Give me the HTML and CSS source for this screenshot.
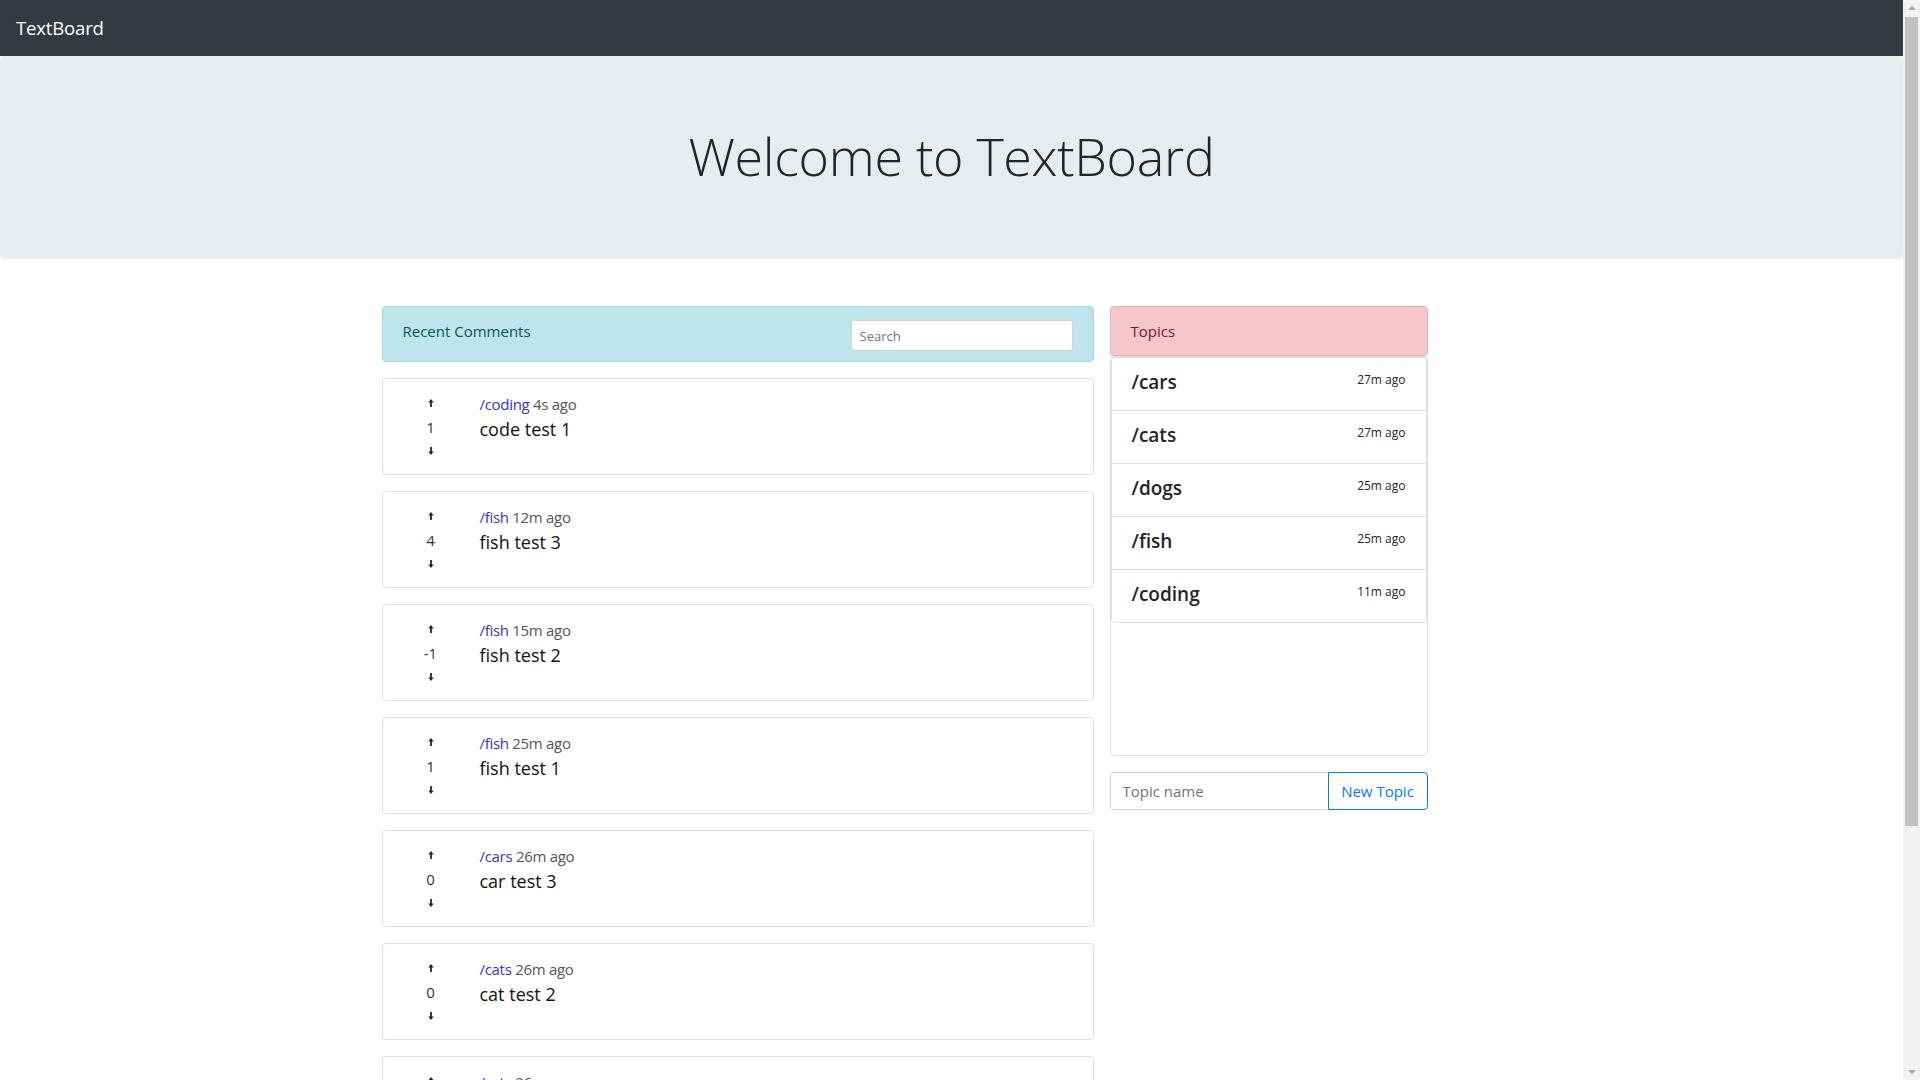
FILE: index.html
```html
<!DOCTYPE html>
<html lang="en">
<head>
<meta charset="utf-8">
<title>TextBoard</title>
<link rel="stylesheet" href="styles.css">
</head>
<body>
<nav class="navbar"><a class="brand" href="#">TextBoard</a></nav>
<header class="jumbotron"><h1 class="display">Welcome to TextBoard</h1></header>
<main class="container">
  <section class="col-comments">
    <div class="comments-header">
      <span class="header-title">Recent Comments</span>
      <input class="search" type="text" placeholder="Search">
    </div>

    <div class="comment">
      <div class="vote">
        <svg class="arrow up" viewBox="0 0 6 9"><path d="M3 0 L6 4 H4 V9 H2 V4 H0 Z"/></svg>
        <span class="score">1</span>
        <svg class="arrow down" viewBox="0 0 6 9"><path d="M3 9 L6 5 H4 V0 H2 V5 H0 Z"/></svg>
      </div>
      <div class="comment-body">
        <div class="meta"><a href="#" class="topic-link">/coding</a> <span class="time">4s ago</span></div>
        <div class="text">code test 1</div>
      </div>
    </div>

    <div class="comment">
      <div class="vote">
        <svg class="arrow up" viewBox="0 0 6 9"><path d="M3 0 L6 4 H4 V9 H2 V4 H0 Z"/></svg>
        <span class="score">4</span>
        <svg class="arrow down" viewBox="0 0 6 9"><path d="M3 9 L6 5 H4 V0 H2 V5 H0 Z"/></svg>
      </div>
      <div class="comment-body">
        <div class="meta"><a href="#" class="topic-link">/fish</a> <span class="time">12m ago</span></div>
        <div class="text">fish test 3</div>
      </div>
    </div>

    <div class="comment">
      <div class="vote">
        <svg class="arrow up" viewBox="0 0 6 9"><path d="M3 0 L6 4 H4 V9 H2 V4 H0 Z"/></svg>
        <span class="score">-1</span>
        <svg class="arrow down" viewBox="0 0 6 9"><path d="M3 9 L6 5 H4 V0 H2 V5 H0 Z"/></svg>
      </div>
      <div class="comment-body">
        <div class="meta"><a href="#" class="topic-link">/fish</a> <span class="time">15m ago</span></div>
        <div class="text">fish test 2</div>
      </div>
    </div>

    <div class="comment">
      <div class="vote">
        <svg class="arrow up" viewBox="0 0 6 9"><path d="M3 0 L6 4 H4 V9 H2 V4 H0 Z"/></svg>
        <span class="score">1</span>
        <svg class="arrow down" viewBox="0 0 6 9"><path d="M3 9 L6 5 H4 V0 H2 V5 H0 Z"/></svg>
      </div>
      <div class="comment-body">
        <div class="meta"><a href="#" class="topic-link">/fish</a> <span class="time">25m ago</span></div>
        <div class="text">fish test 1</div>
      </div>
    </div>

    <div class="comment">
      <div class="vote">
        <svg class="arrow up" viewBox="0 0 6 9"><path d="M3 0 L6 4 H4 V9 H2 V4 H0 Z"/></svg>
        <span class="score">0</span>
        <svg class="arrow down" viewBox="0 0 6 9"><path d="M3 9 L6 5 H4 V0 H2 V5 H0 Z"/></svg>
      </div>
      <div class="comment-body">
        <div class="meta"><a href="#" class="topic-link">/cars</a> <span class="time">26m ago</span></div>
        <div class="text">car test 3</div>
      </div>
    </div>

    <div class="comment">
      <div class="vote">
        <svg class="arrow up" viewBox="0 0 6 9"><path d="M3 0 L6 4 H4 V9 H2 V4 H0 Z"/></svg>
        <span class="score">0</span>
        <svg class="arrow down" viewBox="0 0 6 9"><path d="M3 9 L6 5 H4 V0 H2 V5 H0 Z"/></svg>
      </div>
      <div class="comment-body">
        <div class="meta"><a href="#" class="topic-link">/cats</a> <span class="time">26m ago</span></div>
        <div class="text">cat test 2</div>
      </div>
    </div>

    <div class="comment">
      <div class="vote">
        <svg class="arrow up" viewBox="0 0 6 9"><path d="M3 0 L6 4 H4 V9 H2 V4 H0 Z"/></svg>
        <span class="score">0</span>
        <svg class="arrow down" viewBox="0 0 6 9"><path d="M3 9 L6 5 H4 V0 H2 V5 H0 Z"/></svg>
      </div>
      <div class="comment-body">
        <div class="meta"><a href="#" class="topic-link">/cats</a> <span class="time">26m ago</span></div>
        <div class="text">cat test 1</div>
      </div>
    </div>

    <div class="comment">
      <div class="vote">
        <svg class="arrow up" viewBox="0 0 6 9"><path d="M3 0 L6 4 H4 V9 H2 V4 H0 Z"/></svg>
        <span class="score">0</span>
        <svg class="arrow down" viewBox="0 0 6 9"><path d="M3 9 L6 5 H4 V0 H2 V5 H0 Z"/></svg>
      </div>
      <div class="comment-body">
        <div class="meta"><a href="#" class="topic-link">/cars</a> <span class="time">27m ago</span></div>
        <div class="text">car test 2</div>
      </div>
    </div>

    <div class="comment">
      <div class="vote">
        <svg class="arrow up" viewBox="0 0 6 9"><path d="M3 0 L6 4 H4 V9 H2 V4 H0 Z"/></svg>
        <span class="score">0</span>
        <svg class="arrow down" viewBox="0 0 6 9"><path d="M3 9 L6 5 H4 V0 H2 V5 H0 Z"/></svg>
      </div>
      <div class="comment-body">
        <div class="meta"><a href="#" class="topic-link">/cars</a> <span class="time">27m ago</span></div>
        <div class="text">car test 1</div>
      </div>
    </div>
  </section>

  <aside class="col-topics">
    <div class="topics-header">Topics</div>
    <div class="topics-box">
      <ul class="list-group">
        <li class="list-item"><h5 class="topic-name">/cars</h5><small class="topic-time">27m ago</small></li>
        <li class="list-item"><h5 class="topic-name">/cats</h5><small class="topic-time">27m ago</small></li>
        <li class="list-item"><h5 class="topic-name">/dogs</h5><small class="topic-time">25m ago</small></li>
        <li class="list-item"><h5 class="topic-name">/fish</h5><small class="topic-time">25m ago</small></li>
        <li class="list-item"><h5 class="topic-name">/coding</h5><small class="topic-time">11m ago</small></li>
      </ul>
    </div>
    <div class="input-group">
      <input class="topic-input" type="text" placeholder="Topic name">
      <button class="btn-new" type="button">New Topic</button>
    </div>
  </aside>
</main>
<div class="scrollbar" aria-hidden="true">
  <span class="sb-arrow sb-up"></span>
  <span class="sb-thumb"></span>
  <span class="sb-arrow sb-down"></span>
</div>
</body>
</html>
```

FILE: styles.css
```css
body {
  margin: 0 17px 0 0;
  font-family: "Open Sans", "Noto Sans", sans-serif;
  font-size: 16px;
  line-height: 1.5;
  color: #212529;
  background: #fff;
}
.scrollbar {
  position: fixed;
  top: 0;
  right: 0;
  width: 17px;
  height: 100vh;
  background: #f1f1f1;
  display: flex;
  flex-direction: column;
  align-items: center;
}
.sb-arrow {
  display: block;
  width: 0;
  height: 0;
  border-left: 4px solid transparent;
  border-right: 4px solid transparent;
}
.sb-up {
  margin: 6px 0 6px;
  border-bottom: 4px solid #a3a3a3;
}
.sb-thumb {
  display: block;
  width: 13px;
  height: 809px;
  margin-top: 1px;
  background: #c1c1c1;
}
.sb-down {
  margin-top: auto;
  margin-bottom: 6px;
  border-top: 4px solid #a3a3a3;
}
.navbar {
  background: #343a40;
  padding: 8px 16px;
  display: flex;
  align-items: center;
}
.brand {
  color: #fff;
  text-decoration: none;
  font-size: 18.6px;
  line-height: 30px;
  padding: 5px 0;
  letter-spacing: -0.2px;
}
.jumbotron {
  background: #e9ecef;
  padding: 64px 32px;
  border-radius: 5px;
  text-align: center;
}
.display {
  margin: 2px 0 6px;
  font-size: 52px;
  font-weight: 300;
  line-height: 67px;
  color: #212529;
  letter-spacing: -0.3px;
}
.container {
  width: 1140px;
  margin: 47px auto 16px;
  display: flex;
  align-items: flex-start;
  gap: 16px;
}
.col-comments {
  width: 712px;
}
.col-topics {
  width: 318px;
}
.comments-header {
  display: flex;
  justify-content: space-between;
  align-items: flex-start;
  padding: 12px 20px 10px;
  background: #bee5eb;
  border: 1px solid #a5d7df;
  border-radius: 4px;
  color: #0c5460;
}
.header-title {
  font-size: 15px;
  line-height: 24px;
}
.search {
  width: 222px;
  height: 31px;
  margin-top: 1px;
  box-sizing: border-box;
  padding: 4px 8px;
  font-family: inherit;
  font-size: 13px;
  border: 1px solid #ced4da;
  border-radius: 3px;
  background: #fff;
  color: #495057;
}
.search::placeholder {
  color: #6c757d;
}
.comment {
  margin-top: 16px;
  border: 1px solid #dfdfdf;
  border-radius: 4px;
  padding: 16px;
  display: flex;
}
.vote {
  width: 64px;
  margin-right: 17px;
  display: flex;
  flex-direction: column;
  align-items: center;
}
.arrow {
  display: block;
  width: 6px;
  height: 8px;
  fill: #212529;
}
.arrow.up {
  margin: 4px 0 10px;
}
.arrow.down {
  margin: 9px 0 3px;
}
.score {
  color: #333;
  font-size: 15px;
  line-height: 21px;
}
.comment-body {
  flex: 1;
}
.meta {
  font-size: 15px;
  line-height: 19px;
  letter-spacing: -0.3px;
}
.topic-link {
  color: #3535c8;
  text-decoration: none;
}
.time {
  color: #555;
}
.text {
  font-size: 18px;
  line-height: 30px;
  color: #111;
}
.topics-header {
  padding: 12px 20px;
  background: #f5c6cb;
  border: 1px solid #eaaab2;
  border-radius: 4px;
  color: #721c24;
  font-size: 15px;
  line-height: 24px;
}
.topics-box {
  height: 400px;
  box-sizing: border-box;
  border: 1px solid #dfdfdf;
  border-radius: 4px;
  overflow-y: auto;
}
.list-group {
  list-style: none;
  margin: 0;
  padding: 0;
}
.list-item {
  display: flex;
  justify-content: space-between;
  align-items: flex-start;
  padding: 12px 20px;
  border: 1px solid #dfdfdf;
  margin-bottom: -1px;
}
.list-item:first-child {
  border-top-left-radius: 4px;
  border-top-right-radius: 4px;
}
.list-item:last-child {
  margin-bottom: 0;
  border-bottom-left-radius: 4px;
  border-bottom-right-radius: 4px;
}
.topic-name {
  margin: 0 0 4px;
  font-size: 19px;
  font-weight: 600;
  line-height: 24px;
  color: #212529;
}
.topic-time {
  font-size: 12px;
  line-height: 19px;
  color: #212529;
}
.input-group {
  margin-top: 16px;
  display: flex;
}
.topic-input {
  flex: 1;
  min-width: 0;
  height: 38px;
  box-sizing: border-box;
  padding: 6px 12px;
  font-family: inherit;
  font-size: 15px;
  border: 1px solid #ced4da;
  border-radius: 4px 0 0 4px;
  color: #495057;
}
.topic-input::placeholder {
  color: #6c757d;
}
.btn-new {
  width: 100px;
  height: 38px;
  box-sizing: border-box;
  padding: 6px 8px;
  font-family: inherit;
  font-size: 15px;
  color: #007bff;
  background: #fff;
  border: 1px solid #007bff;
  border-radius: 0 4px 4px 0;
  margin-left: -1px;
  white-space: nowrap;
}
```
